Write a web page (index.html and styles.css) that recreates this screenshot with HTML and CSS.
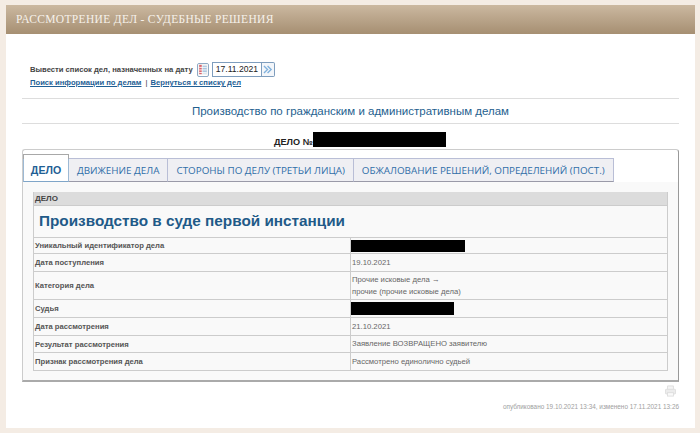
FILE: index.html
```html
<!DOCTYPE html>
<html lang="ru">
<head>
<meta charset="utf-8">
<title>Рассмотрение дел</title>
<link rel="stylesheet" href="styles.css">
</head>
<body>
<div class="page">
  <header class="banner">РАССМОТРЕНИЕ ДЕЛ - СУДЕБНЫЕ РЕШЕНИЯ</header>
  <main class="content">
    <div class="datebar">
      <span class="datelabel">Вывести список дел, назначенных на дату</span>
      <span class="calbtn">
        <svg width="10" height="11" viewBox="0 0 11 13"><rect x="0" y="0" width="11" height="13" fill="#f3f3f3"/><rect x="1" y="1" width="3" height="11" fill="#d9636b"/><rect x="5" y="2" width="5" height="9" fill="#a9c4de"/><path d="M1 4h9M1 7h9M1 10h9" stroke="#fff" stroke-width="1"/></svg>
      </span>
      <span class="dateinput">17.11.2021</span><span class="gobtn">
        <svg width="10" height="9" viewBox="0 0 11 10"><path d="M1 1l4 4-4 4M5 1l4 4-4 4" fill="none" stroke="#7fb0dc" stroke-width="1.5"/></svg>
      </span>
    </div>
    <div class="links"><a href="#">Поиск информации по делам</a><span class="sep">|</span><a href="#">Вернуться к списку дел</a></div>
    <h2 class="section">Производство по гражданским и административным делам</h2>
    <div class="casenum">ДЕЛО №<span class="black casenum-black"></span></div>
    <section class="tabsbox">
      <nav class="tabs">
        <a class="tab active">ДЕЛО</a>
        <a class="tab">ДВИЖЕНИЕ ДЕЛА</a>
        <a class="tab">СТОРОНЫ ПО ДЕЛУ (ТРЕТЬИ ЛИЦА)</a>
        <a class="tab">ОБЖАЛОВАНИЕ РЕШЕНИЙ, ОПРЕДЕЛЕНИЙ (ПОСТ.)</a>
      </nav>
      <div class="panel">
        <table class="case">
          <tr class="r-head"><th colspan="2">ДЕЛО</th></tr>
          <tr class="r-title"><td colspan="2">Производство в суде первой инстанции</td></tr>
          <tr class="r-a"><td class="k">Уникальный идентификатор дела</td><td class="v"><span class="black uid"></span></td></tr>
          <tr class="r-b"><td class="k">Дата поступления</td><td class="v">19.10.2021</td></tr>
          <tr class="r-c"><td class="k">Категория дела</td><td class="v">Прочие исковые дела →<br>прочие (прочие исковые дела)</td></tr>
          <tr class="r-b"><td class="k">Судья</td><td class="v"><span class="black judge"></span></td></tr>
          <tr class="r-b"><td class="k">Дата рассмотрения</td><td class="v">21.10.2021</td></tr>
          <tr class="r-d"><td class="k">Результат рассмотрения</td><td class="v">Заявление ВОЗВРАЩЕНО заявителю</td></tr>
          <tr class="r-b"><td class="k">Признак рассмотрения дела</td><td class="v">Рассмотрено единолично судьей</td></tr>
        </table>
      </div>
    </section>
    <div class="print">
      <svg width="11" height="12" viewBox="0 0 13 14"><path d="M3 5V1h7v4" fill="#f5f5f5" stroke="#dcdcdc"/><rect x="0.5" y="5" width="12" height="5.5" rx="1" fill="#ececec" stroke="#dcdcdc"/><rect x="3" y="9" width="7" height="4" fill="#f9f9f9" stroke="#dcdcdc"/></svg>
    </div>
    <div class="meta">опубликовано 19.10.2021 13:34, изменено 17.11.2021 13:26</div>
  </main>
</div>
</body>
</html>
```
FILE: styles.css
```css
html, body { margin: 0; padding: 0; }
body {
  background: #f4ece4;
  font-family: "Liberation Sans", Arial, sans-serif;
  height: 433px;
  overflow: hidden;
}
.page {
  margin: 5px 5px 0 6px;
  background: #fff;
  height: 423px;
}
.banner {
  height: 29px;
  line-height: 28px;
  padding-left: 10px;
  background: linear-gradient(#cbb8a0, #a68f72);
  color: #f6f1ea;
  font-family: "Liberation Serif", "Times New Roman", serif;
  font-size: 11.5px;
  letter-spacing: 0.33px;
}
.content { padding: 0 16px; }
.datebar {
  display: flex;
  align-items: center;
  margin: 28px 0 0 8px;
  height: 15px;
}
.datelabel { font-size: 7.65px; font-weight: bold; color: #444; margin-right: 4px; }
.calbtn {
  width: 10px; height: 12px;
  border: 1px solid #8fa9c4;
  border-radius: 2px;
  display: flex;
  align-items: center;
  justify-content: center;
  margin-right: 3px;
}
.dateinput {
  width: 45px; height: 13px;
  border: 1px solid #7e9dbd;
  font-size: 8.6px;
  line-height: 13px;
  padding-left: 3px;
  color: #222;
}
.gobtn {
  width: 12px; height: 13px;
  border: 1px solid #7e9dbd;
  border-left: 0;
  border-radius: 0 2px 2px 0;
  background: #f3f6fa;
  display: flex;
  align-items: center;
  justify-content: center;
}
.links {
  margin: 0 0 0 8px;
  height: 21px;
  font-size: 7.65px;
  font-weight: bold;
  line-height: 11px;
}
.links a { color: #1f5f95; text-decoration: underline; }
.sep { color: #333; font-weight: normal; margin: 0 3px 0 4px; }
.section {
  margin: 0;
  height: 24px;
  border-top: 1px solid #ddd;
  border-bottom: 1px solid #ddd;
  text-align: center;
  font-size: 11.5px;
  font-weight: normal;
  line-height: 24px;
  color: #1f5f8f;
}
.casenum {
  margin-top: 8px;
  height: 17px;
  padding-left: 252px;
  font-size: 9.1px;
  font-weight: bold;
  line-height: 20px;
  color: #222;
  display: flex;
}
.black { display: block; background: #000; }
.casenum-black { width: 133px; height: 15px; }
.tabsbox {
  height: 230px;
  border: 1px solid #ccc;
  border-bottom: 2px solid #aaa;
  border-right: 1px solid #999;
  border-radius: 3px 3px 0 0;
}
.tabs {
  display: flex;
  height: 24px;
  margin-top: 8px;
}
.tab {
  display: block;
  height: 24px;
  box-sizing: border-box;
  padding: 0 8px;
  line-height: 23px;
  background: #efeff3;
  color: #2f6ea8;
  font-family: "Open Sans", "Liberation Sans", sans-serif;
  font-size: 9.85px;
  border: 1px solid #b9bed6;
  border-left: 0;
  border-bottom-color: #9a9aa8;
  white-space: nowrap;
}
.tab.active {
  position: relative;
  width: 46px;
  padding: 0;
  text-align: center;
  background: #fff;
  color: #1f5f95;
  font-family: "Liberation Sans", sans-serif;
  font-weight: bold;
  font-size: 10.6px;
  border: 1px solid #9db9d4;
  border-bottom-color: #7fa5c8;
}
.tab.active::before {
  content: "";
  position: absolute;
  left: -1px; right: -1px; top: -5px;
  height: 5px;
  border: 1px solid #a8a8a8;
  border-bottom: 0;
  box-sizing: border-box;
  background: #fff;
}
.panel {
  background: #f9f9f9;
  height: 198px;
  padding: 10px 10px 0 10px;
  box-sizing: border-box;
}
.case {
  width: 635px;
  table-layout: fixed;
  border-collapse: collapse;
  border-left: 1px solid #ccc;
  border-right: 1px solid #ccc;
  border-bottom: 1px solid #ccc;
  color: #555;
  font-size: 7.67px;
}
.case td { border-top: 1px solid #ccc; border-bottom: 1px solid #ccc; padding: 0 0 0 1px; }
.case .k { width: 316px; font-weight: bold; color: #555; }
.case .v { border-left: 1px solid #ccc; padding-left: 1px; font-size: 7.7px; line-height: 11.5px; color: #666; }
.r-head th {
  height: 13px;
  padding: 0 0 0 1px;
  background: #dcdcdc;
  text-align: left;
  font-size: 8px;
  line-height: 12px;
  color: #444;
}
.r-title td {
  height: 29px;
  font-size: 15.3px;
  font-weight: bold;
  color: #1f5a88;
}
.case .r-title td { padding: 0 0 2px 5px; }
.r-a td { height: 15px; }
.r-b td { height: 17px; }
.r-c td { height: 27px; }
.r-d td { height: 16px; }
.uid { width: 114px; height: 12px; margin-left: -1px; }
.judge { width: 103px; height: 13px; margin-left: -1px; }
.print { display: flex; justify-content: flex-end; margin: 3px 3px 0 0; height: 15px; }
.meta {
  margin-top: 3px;
  text-align: right;
  font-size: 6.4px;
  color: #a0a0a0;
}
```
